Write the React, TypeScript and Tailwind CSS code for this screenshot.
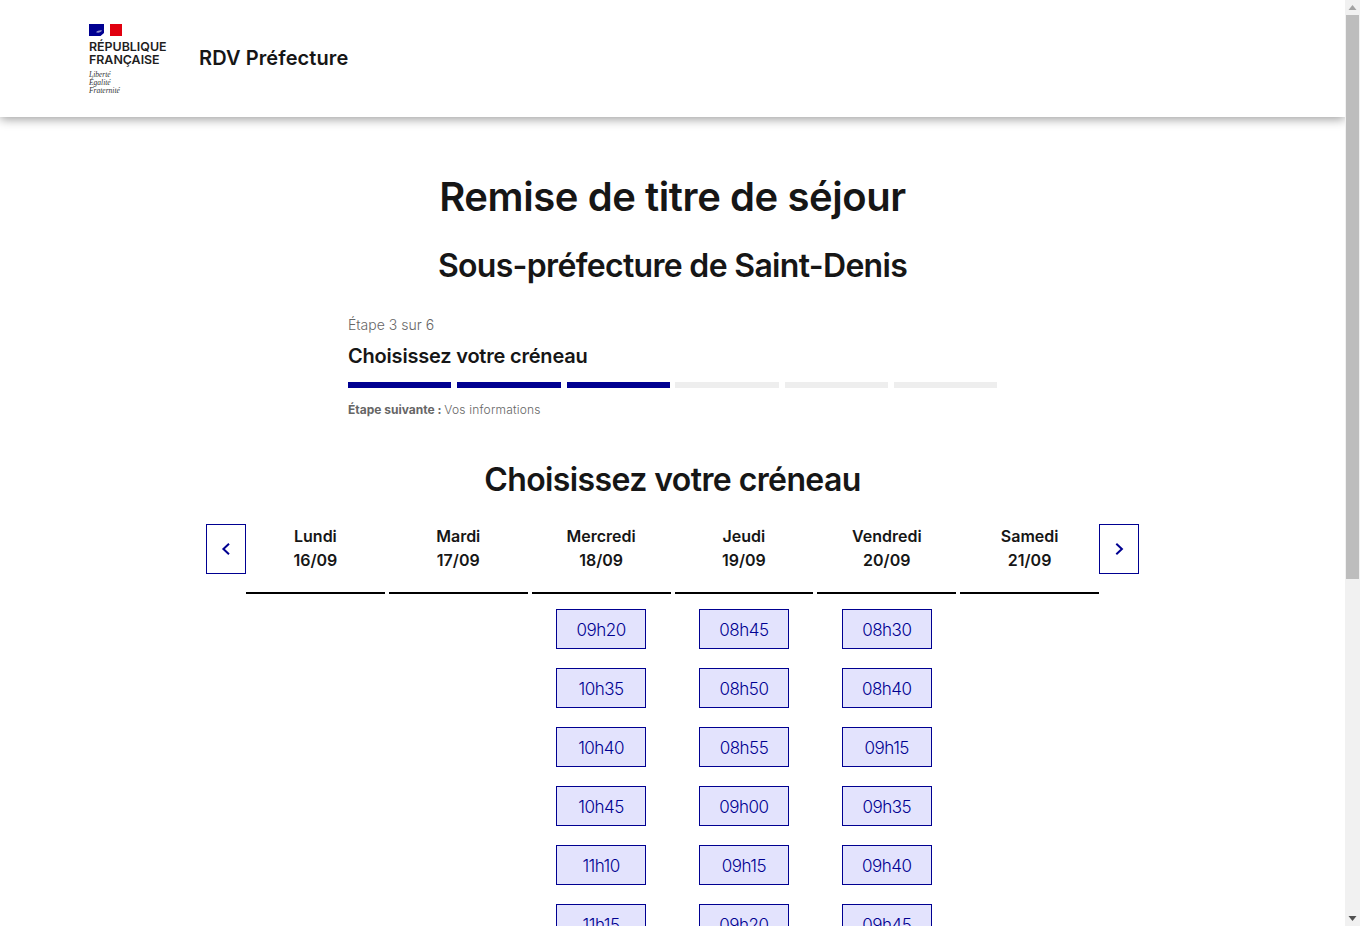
const days = [
  { name: "Lundi", date: "16/09", slots: [] as string[] },
  { name: "Mardi", date: "17/09", slots: [] as string[] },
  { name: "Mercredi", date: "18/09", slots: ["09h20", "10h35", "10h40", "10h45", "11h10", "11h15"] },
  { name: "Jeudi", date: "19/09", slots: ["08h45", "08h50", "08h55", "09h00", "09h15", "09h20"] },
  { name: "Vendredi", date: "20/09", slots: ["08h30", "08h40", "09h15", "09h35", "09h40", "09h45"] },
  { name: "Samedi", date: "21/09", slots: [] as string[] },
];

const bars = [
  "w-[103px] bg-[#000091]",
  "w-[104px] bg-[#000091]",
  "w-[103px] bg-[#000091]",
  "-ml-px w-[104px] bg-[#eeeeee]",
  "w-[103px] bg-[#eeeeee]",
  "w-[103px] bg-[#eeeeee]",
];

function Flag() {
  return (
    <svg width="33" height="12" viewBox="0 0 33 12" className="block">
      <rect width="33" height="12" fill="#fff" />
      <rect width="15" height="12" fill="#000091" />
      <rect x="21" width="12" height="12" fill="#e1000f" />
      <path d="M21 0 L21 12 L11.5 12 L14.5 9.6 L15.3 8.2 L15.1 7 L15.8 6.5 L14.8 5.4 L15.9 3.6 L16.3 1.8 L15 0 Z" fill="#fff" />
      <path d="M7 8.2 C8.5 6.8 10.5 6 13 6.4 C12.2 7.8 10.6 8.4 9 8.8 Z" fill="#8f8fcc" />
    </svg>
  );
}

function Chevron({ dir }: { dir: "left" | "right" }) {
  return (
    <svg width="16" height="16" viewBox="0 0 16 16" fill="none" stroke="#000091" strokeWidth="2">
      {dir === "left" ? <path d="M11 2.8 L5.4 8 L11 13.2" /> : <path d="M5.3 2.8 L10.9 8 L5.3 13.2" />}
    </svg>
  );
}

export default function App() {
  return (
    <div className="flex h-[926px] w-[1360px] overflow-hidden bg-white font-['Inter',sans-serif] text-[#161616]">
      <div className="flex w-[1345px] flex-col">
        <header className="z-10 flex h-[117px] shrink-0 items-start bg-white pl-[89px] shadow-[0_2px_10px_rgba(0,0,0,0.4)]">
          <div className="flex w-[110px] flex-col pt-6">
            <Flag />
            <div className="mt-[4px] text-[12.4px] leading-[13px] font-semibold text-[#1e1e1e]">
              RÉPUBLIQUE
              <br />
              FRANÇAISE
            </div>
            <div className="mt-[5px] font-['Liberation_Serif',serif] text-[7.5px] leading-[8px] text-[#333] italic">
              Liberté
              <br />
              Égalité
              <br />
              Fraternité
            </div>
          </div>
          <div className="pt-[45px] text-[20px] leading-[26px] font-semibold tracking-[0.1px]">RDV Préfecture</div>
        </header>

        <main className="flex flex-col items-center">
          <h1 className="mt-[56px] text-[40px] leading-[48px] font-semibold tracking-[-0.42px]">Remise de titre de séjour</h1>
          <h2 className="mt-[25px] text-[32px] leading-[40px] font-semibold tracking-[-0.68px]">Sous-préfecture de Saint-Denis</h2>

          <section className="mt-[27px] w-[649px]">
            <div className="text-[14px] leading-[24px] font-light text-[#666]">Étape 3 sur 6</div>
            <div className="mt-[5px] text-[20px] leading-[28px] font-semibold tracking-[-0.2px]">Choisissez votre créneau</div>
            <div className="mt-[12px] flex h-[6px] gap-[6px]">
              {bars.map((b, i) => (
                <div key={i} className={b} />
              ))}
            </div>
            <div className="mt-[12px] text-[12px] leading-[20px] font-light tracking-[0.2px] text-[#666]">
              <span className="font-bold tracking-normal">Étape suivante : </span>Vos informations
            </div>
          </section>

          <h2 className="mt-[40px] text-[32px] leading-[40px] font-semibold tracking-[-0.6px]">Choisissez votre créneau</h2>

          <div className="mt-[24px] flex w-[933px] items-start">
            <button className="flex h-[50px] w-10 shrink-0 items-center justify-center border border-[#000091] bg-white">
              <Chevron dir="left" />
            </button>
            <div className="grid w-[853.05px] shrink-0 grid-cols-6 gap-x-1">
              {days.map((d) => (
                <div key={d.name} className="flex flex-col items-center">
                  <div className="flex h-[70px] w-full flex-col items-center border-b-2 border-black pb-[8px] text-[16px] leading-6 font-semibold">
                    <span>{d.name}</span>
                    <span>{d.date}</span>
                  </div>
                  <div className="mt-[15px] flex flex-col gap-[19px]">
                    {d.slots.map((s) => (
                      <button
                        key={s}
                        className="h-10 w-[90px] border border-[#000091] bg-[#e3e3fd] pt-[2px] text-[17px] leading-6 font-light tracking-[-0.5px] text-[#000091]"
                      >
                        {s}
                      </button>
                    ))}
                  </div>
                </div>
              ))}
            </div>
            <button className="flex h-[50px] w-10 shrink-0 items-center justify-center border border-[#000091] bg-white">
              <Chevron dir="right" />
            </button>
          </div>
        </main>
      </div>

      <div className="z-20 flex h-[926px] w-[15px] shrink-0 flex-col items-center bg-[#f1f1f1]">
        <svg width="15" height="15" viewBox="0 0 15 15" className="shrink-0">
          <path d="M7.5 5 L11.5 10 L3.5 10 Z" fill="#a3a3a3" />
        </svg>
        <div className="h-[564px] w-[13px] bg-[#bdbdbd]" />
        <div className="flex-1" />
        <svg width="15" height="15" viewBox="0 0 15 15" className="shrink-0">
          <path d="M7.5 10 L11.5 5 L3.5 5 Z" fill="#505050" />
        </svg>
      </div>
    </div>
  );
}
